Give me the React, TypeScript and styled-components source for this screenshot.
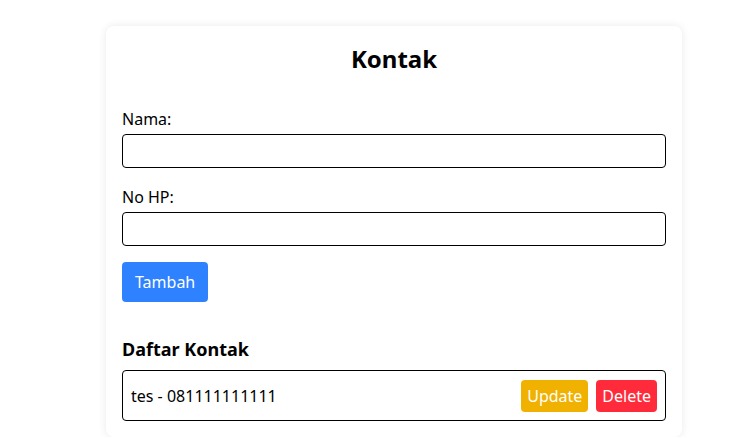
import React from "react";
import styled, { createGlobalStyle } from "styled-components";

const Global = createGlobalStyle`
  html, body { margin: 0; padding: 0; background: #ffffff; }
  body { font-family: "Noto Sans", "Segoe UI", Arial, sans-serif; color: #000; }
  * { box-sizing: border-box; }
`;

const Page = styled.div`
  padding: 26px 0 0 106px;
`;

const Card = styled.div`
  width: 576px;
  padding: 16px;
  background: #fff;
  border-radius: 8px;
  box-shadow: 0 0 8px rgba(0, 0, 0, 0.09);
`;

const Title = styled.h2`
  margin: 0 0 33px;
  font-size: 24px;
  font-weight: 700;
  text-align: center;
`;

const Form = styled.form`
  display: flex;
  flex-direction: column;
`;

const Field = styled.div<{ $mb: number }>`
  display: flex;
  flex-direction: column;
  gap: 4px;
  margin-bottom: ${(p) => p.$mb}px;
`;

const Label = styled.label`
  font-size: 16px;
`;

const Input = styled.input`
  height: 34px;
  width: 100%;
  border: 1px solid #000;
  border-radius: 4px;
  padding: 0 8px;
  font: inherit;
  background: #fff;
`;

const Button = styled.button<{ $bg: string; $h: number; $px: number }>`
  height: ${(p) => p.$h}px;
  padding: 0 ${(p) => p.$px}px;
  border: none;
  border-radius: 4px;
  background: ${(p) => p.$bg};
  color: #fff;
  font-family: inherit;
  font-size: 16px;
  cursor: pointer;
`;

const Row = styled.div`
  display: flex;
`;

const SubTitle = styled.h3`
  margin: 35px 0 9px;
  font-size: 18px;
  font-weight: 700;
`;

const List = styled.ul`
  list-style: none;
  margin: 0;
  padding: 0;
`;

const Item = styled.li`
  display: flex;
  align-items: center;
  justify-content: space-between;
  height: 51px;
  padding: 0 8px;
  border: 1px solid #000;
  border-radius: 4px;
  font-size: 16px;
`;

const Actions = styled.div`
  display: flex;
  gap: 8px;
`;

export default function App() {
  return (
    <>
      <Global />
      <Page>
        <Card>
          <Title>Kontak</Title>
          <Form onSubmit={(e) => e.preventDefault()}>
            <Field $mb={18}>
              <Label>Nama:</Label>
              <Input type="text" />
            </Field>
            <Field $mb={16}>
              <Label>No HP:</Label>
              <Input type="text" />
            </Field>
            <Row>
              <Button type="submit" $bg="#2f82ff" $h={40} $px={13}>
                Tambah
              </Button>
            </Row>
          </Form>
          <SubTitle>Daftar Kontak</SubTitle>
          <List>
            <Item>
              <span>tes - 081111111111</span>
              <Actions>
                <Button $bg="#f0b100" $h={32} $px={6}>Update</Button>
                <Button $bg="#ff2b3b" $h={32} $px={6}>Delete</Button>
              </Actions>
            </Item>
          </List>
        </Card>
      </Page>
    </>
  );
}
